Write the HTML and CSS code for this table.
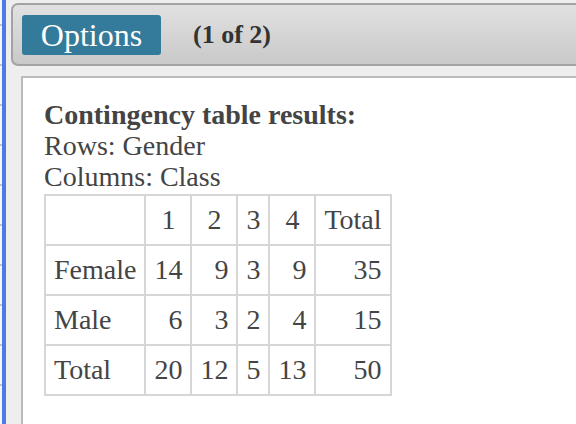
FILE: index.html
```html
<!DOCTYPE html>
<html>
<head>
<meta charset="utf-8">
<link rel="stylesheet" href="styles.css">
</head>
<body>
<div class="page">
  <div class="gutter"></div>
  <div class="rail"></div>
  <main class="main">
    <header class="toolbar">
      <button class="options">Options</button>
      <span class="pager">(1 of 2)</span>
    </header>
    <section class="panel">
      <div class="title">Contingency table results:</div>
      <div class="line">Rows: Gender</div>
      <div class="line">Columns: Class</div>
      <table class="ct">
        <tr class="head"><th></th><td>1</td><td>2</td><td>3</td><td>4</td><td>Total</td></tr>
        <tr><th>Female</th><td>14</td><td>9</td><td>3</td><td>9</td><td>35</td></tr>
        <tr><th>Male</th><td>6</td><td>3</td><td>2</td><td>4</td><td>15</td></tr>
        <tr><th>Total</th><td>20</td><td>12</td><td>5</td><td>13</td><td>50</td></tr>
      </table>
    </section>
  </main>
</div>
</body>
</html>
```

FILE: styles.css
```css
html, body {
  margin: 0;
  padding: 0;
  height: 100%;
  overflow: hidden;
}
body {
  font-family: "Liberation Serif", "Times New Roman", serif;
  color: #444;
  background: #eeeeee;
}
.page {
  display: flex;
  height: 424px;
}
.gutter {
  width: 2px;
  flex: none;
  background: repeating-linear-gradient(to bottom, #f6f6f6 0, #f6f6f6 24px, #c4c4c4 24px, #c4c4c4 26px, #f6f6f6 26px, #f6f6f6 40px);
}
.rail {
  width: 4px;
  flex: none;
  background: #4a7be9;
}
.main {
  flex: 1;
  min-width: 0;
  padding: 3px 0 0 5px;
  overflow: hidden;
}
.toolbar {
  display: flex;
  align-items: center;
  gap: 32px;
  width: 620px;
  height: 59px;
  padding: 0 9px;
  border: 2px solid #a3a3a3;
  border-radius: 7px;
  background: linear-gradient(to bottom, #e1e1e1, #c9c9c9);
}
.options {
  width: 139px;
  height: 40px;
  padding: 0;
  border: none;
  border-radius: 3px;
  background: #347a9a;
  color: #fff;
  font-family: "Liberation Serif", "Times New Roman", serif;
  font-size: 32px;
  line-height: 40px;
}
.pager {
  font-weight: bold;
  font-size: 26px;
  color: #333;
}
.panel {
  margin: 10px 0 0 10px;
  width: 620px;
  height: 400px;
  background: #fff;
  border: 2px solid #bbbbbb;
  padding: 21px 21px;
  font-size: 28px;
  line-height: 31px;
}
.title {
  font-weight: bold;
}
.ct {
  margin-top: 2px;
  border-collapse: collapse;
  line-height: 32px;
}
.ct th, .ct td {
  border: 2px solid #d6d6d6;
  padding: 8px 8px;
  font-weight: normal;
}
.ct th {
  text-align: left;
}
.ct td {
  text-align: right;
}
.ct .head td {
  text-align: center;
}
```
